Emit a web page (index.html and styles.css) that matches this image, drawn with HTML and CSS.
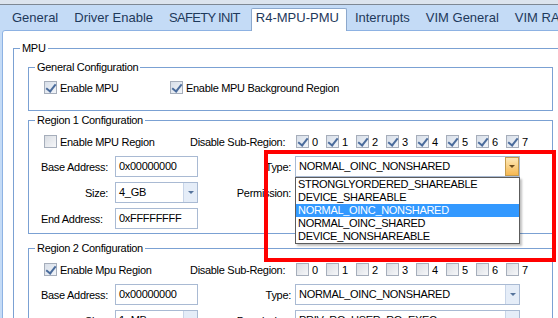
FILE: index.html
```html
<!DOCTYPE html>
<html lang="en">
<head>
<meta charset="UTF-8" />
<meta name="viewport" content="width=device-width, initial-scale=1.0" />
<title>R4-MPU-PMU</title>
<link rel="stylesheet" href="styles.css">
</head>
<body>
    <div class="topline"></div>
    <div class="tabs">
        <div class="tab">General</div>
        <div class="tab">Driver Enable</div>
        <div class="tab caps">SAFETY INIT</div>
        <div class="tab active">R4-MPU-PMU</div>
        <div class="tab">Interrupts</div>
        <div class="tab">VIM General</div>
        <div class="tab">VIM RAM</div>
    </div>

    <div class="panel">
        <fieldset class="group mpu">
            <legend>MPU</legend>

            <fieldset class="group general">
                <legend>General Configuration</legend>
                <div class="gen-body">
                    <div class="checks">
                        <label class="check gen-first"><span class="cb on"></span>Enable MPU</label>
                        <label class="check"><span class="cb on"></span>Enable MPU Background Region</label>
                    </div>
                </div>
            </fieldset>

            <!-- Region 1 -->
            <fieldset class="group region region1">
                <legend>Region 1 Configuration</legend>
                <div class="rbody">
                    <div class="checks">
                        <label class="check enable"><span class="cb"></span>Enable MPU Region</label>
                        <span class="sub-title">Disable Sub-Region:</span>
                        <label class="check sub"><span class="cb on"></span>0</label>
                        <label class="check sub"><span class="cb on"></span>1</label>
                        <label class="check sub"><span class="cb on"></span>2</label>
                        <label class="check sub"><span class="cb on"></span>3</label>
                        <label class="check sub"><span class="cb on"></span>4</label>
                        <label class="check sub"><span class="cb on"></span>5</label>
                        <label class="check sub"><span class="cb on"></span>6</label>
                        <label class="check sub"><span class="cb on"></span>7</label>
                    </div>
                    <div class="fields">
                        <span>Base Address:</span>
                        <div class="input">0x00000000</div>
                        <span class="lbl-r">Type:</span>
                        <div class="combo-cell">
                            <div class="combo">
                                <span class="val">NORMAL_OINC_NONSHARED</span>
                                <span class="btn hot"></span>
                            </div>
                            <div class="list">
                                <div>STRONGLYORDERED_SHAREABLE</div>
                                <div>DEVICE_SHAREABLE</div>
                                <div class="sel">NORMAL_OINC_NONSHARED</div>
                                <div>NORMAL_OINC_SHARED</div>
                                <div>DEVICE_NONSHAREABLE</div>
                            </div>
                        </div>

                        <span class="lbl-size">Size:</span>
                        <div class="combo"><span class="val">4_GB</span><span class="btn"></span></div>
                        <span class="lbl-r">Permission:</span>
                        <div class="combo"><span class="val">PRIV_RW_USER_RW_EXEC</span><span class="btn"></span></div>

                        <span>End Address:</span>
                        <div class="input">0xFFFFFFFF</div>
                        <span></span>
                        <span></span>
                    </div>
                </div>
            </fieldset>

            <!-- Region 2 -->
            <fieldset class="group region region2">
                <legend>Region 2 Configuration</legend>
                <div class="rbody">
                    <div class="checks">
                        <label class="check enable"><span class="cb on"></span>Enable Mpu Region</label>
                        <span class="sub-title">Disable Sub-Region:</span>
                        <label class="check sub"><span class="cb"></span>0</label>
                        <label class="check sub"><span class="cb"></span>1</label>
                        <label class="check sub"><span class="cb"></span>2</label>
                        <label class="check sub"><span class="cb"></span>3</label>
                        <label class="check sub"><span class="cb"></span>4</label>
                        <label class="check sub"><span class="cb"></span>5</label>
                        <label class="check sub"><span class="cb"></span>6</label>
                        <label class="check sub"><span class="cb"></span>7</label>
                    </div>
                    <div class="fields">
                        <span>Base Address:</span>
                        <div class="input">0x00000000</div>
                        <span class="lbl-r">Type:</span>
                        <div class="combo"><span class="val">NORMAL_OINC_NONSHARED</span><span class="btn"></span></div>

                        <span class="lbl-size">Size:</span>
                        <div class="combo"><span class="val">1_MB</span><span class="btn"></span></div>
                        <span class="lbl-r">Permission:</span>
                        <div class="combo"><span class="val">PRIV_RO_USER_RO_EXEC</span><span class="btn"></span></div>

                        <span>End Address:</span>
                        <div class="input">0x000FFFFF</div>
                        <span></span>
                        <span></span>
                    </div>
                </div>
            </fieldset>
        </fieldset>
    </div>

    <div class="callout"></div>
</body>
</html>
```

FILE: styles.css
```css
* {
    box-sizing: border-box;
}
body {
    margin: 0;
    width: 558px;
    height: 318px;
    overflow: hidden;
    position: relative;
    background: #c4dbf6;
    font-family: "Liberation Sans", Arial, sans-serif;
    font-size: 11px;
    letter-spacing: -0.3px;
    color: #000;
}
.topline {
    height: 5px;
    background: #dce4ee;
    border-bottom: 1px solid #7e8894;
}
.tabs {
    display: flex;
    align-items: flex-end;
    height: 25px;
    padding-left: 4px;
    font-size: 13px;
    letter-spacing: 0;
    color: #1e395b;
}
.tab {
    height: 24px;
    line-height: 24px;
    padding: 0 8px;
    white-space: nowrap;
}
.tab.caps {
    letter-spacing: -0.7px;
}
.tab.active {
    position: relative;
    z-index: 1;
    height: 23px;
    margin: 0 0 -1px 3px;
    padding: 0 7px 4px 4px;
    line-height: 18px;
    background: #fff;
    border: 1px solid #8ca8cc;
    border-bottom: none;
    border-radius: 2px 2px 0 0;
}
.panel {
    width: 620px;
    height: 300px;
    margin-left: 2px;
    padding: 11px 0 0 10px;
    background: #fff;
    border: 1px solid #8db2e3;
    border-radius: 3px 0 0 0;
}
.group {
    margin: 0;
    padding: 0;
    min-width: 0;
    border: 1px solid #7ba1d3;
}
.group legend {
    margin-left: 6px;
    padding: 0 2px;
    line-height: 13px;
}
.mpu {
    width: 570px;
    height: 320px;
}
.general,
.region {
    width: 525px;
    margin-left: 14px;
}
.general {
    margin-top: 6px;
}
.gen-body {
    padding: 7px 0 16px 15px;
}
.gen-first {
    width: 126px;
}
.region1 {
    margin-top: 3px;
}
.region2 {
    margin-top: 8px;
}
.rbody {
    padding: 8px 0 4px 12px;
}

/* check boxes */
.checks {
    display: flex;
    align-items: center;
    height: 13px;
}
.rbody .checks {
    margin-left: 3px;
}
.check {
    display: flex;
    align-items: center;
    gap: 3px;
    white-space: nowrap;
}
.enable {
    width: 146px;
}
.sub-title {
    width: 106px;
    white-space: nowrap;
}
.sub {
    width: 30px;
}
.cb {
    position: relative;
    flex: none;
    width: 13px;
    height: 13px;
    border: 1px solid #a6aebb;
    background: linear-gradient(135deg, #d9dde3, #f6f7f9);
}
.cb.on {
    background: linear-gradient(135deg, #d8dfe9, #f2f5f9);
}
.cb.on::after {
    content: "";
    position: absolute;
    left: 3px;
    top: 0;
    width: 4px;
    height: 8px;
    border: solid #4b6c9c;
    border-width: 0 2px 2px 0;
    transform: rotate(38deg);
}

/* address / type grid */
.fields {
    display: grid;
    grid-template-columns: 74px 83px 97px 225px;
    grid-auto-rows: 21px;
    row-gap: 5px;
    align-items: center;
    margin-top: 8px;
    white-space: nowrap;
}
.lbl-r {
    text-align: right;
    padding-right: 4px;
}
.lbl-size {
    text-align: right;
    padding-right: 7px;
}
.input {
    height: 21px;
    padding-left: 3px;
    line-height: 19px;
    border: 1px solid #a9bad3;
    background: #fff;
}
.combo {
    display: flex;
    height: 21px;
    border: 1px solid #a9bad3;
    background: #fff;
}
.combo .val {
    flex: 1;
    padding-left: 3px;
    line-height: 19px;
    overflow: hidden;
}
.combo .btn {
    display: flex;
    align-items: center;
    justify-content: center;
    width: 14px;
    border-left: 1px solid #c8d5e8;
    background: #e5edf8;
}
.combo .btn::before {
    content: "";
    border-left: 3px solid transparent;
    border-right: 3px solid transparent;
    border-top: 3px solid #56749c;
}
.combo .btn.hot {
    border: 1px solid #c59c4e;
    background: linear-gradient(#fde9b8, #f6b851);
}
.combo .btn.hot::before {
    border-top-color: #6b4b1c;
}
.combo-cell {
    position: relative;
    height: 21px;
}
.list {
    position: absolute;
    z-index: 2;
    left: 0;
    top: 21px;
    width: 225px;
    border: 1px solid #5c5c5c;
    background: #fff;
    box-shadow: 2px 2px 2px rgba(0,0,0,0.25);
}
.list div {
    height: 13px;
    line-height: 13px;
    padding-left: 2px;
}
.list .sel {
    background: #3399ff;
    color: #fff;
}
.callout {
    position: absolute;
    z-index: 3;
    left: 264px;
    top: 150px;
    width: 292px;
    height: 112px;
    border: 4px solid #f00;
    pointer-events: none;
}
```
